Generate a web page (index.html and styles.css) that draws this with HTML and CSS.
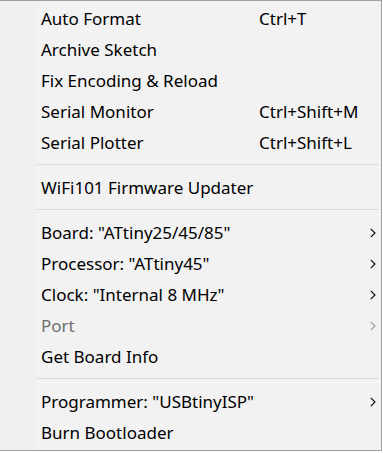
FILE: index.html
```html
<!DOCTYPE html>
<html>
<head>
<meta charset="utf-8">
<link rel="stylesheet" href="styles.css">
</head>
<body>
<div class="menu">
  <div class="item"><span class="label">Auto Format</span><span class="key">Ctrl+T</span></div>
  <div class="item"><span class="label">Archive Sketch</span></div>
  <div class="item"><span class="label">Fix Encoding &amp; Reload</span></div>
  <div class="item"><span class="label">Serial Monitor</span><span class="key">Ctrl+Shift+M</span></div>
  <div class="item"><span class="label">Serial Plotter</span><span class="key">Ctrl+Shift+L</span></div>
  <div class="sep"></div>
  <div class="item"><span class="label">WiFi101 Firmware Updater</span></div>
  <div class="sep"></div>
  <div class="item"><span class="label">Board: "ATtiny25/45/85"</span><span class="key"></span><svg class="arrow" viewBox="0 0 6 10" width="6" height="10"><path d="M0.8 0.8 L5 5 L0.8 9.2" fill="none" stroke="#000" stroke-width="1.1"/></svg></div>
  <div class="item"><span class="label">Processor: "ATtiny45"</span><span class="key"></span><svg class="arrow" viewBox="0 0 6 10" width="6" height="10"><path d="M0.8 0.8 L5 5 L0.8 9.2" fill="none" stroke="#000" stroke-width="1.1"/></svg></div>
  <div class="item"><span class="label">Clock: "Internal 8 MHz"</span><span class="key"></span><svg class="arrow" viewBox="0 0 6 10" width="6" height="10"><path d="M0.8 0.8 L5 5 L0.8 9.2" fill="none" stroke="#000" stroke-width="1.1"/></svg></div>
  <div class="item disabled"><span class="label">Port</span><span class="key"></span><svg class="arrow" viewBox="0 0 6 10" width="6" height="10"><path d="M0.8 0.8 L5 5 L0.8 9.2" fill="none" stroke="#9a9a9a" stroke-width="1.1"/></svg></div>
  <div class="item"><span class="label">Get Board Info</span></div>
  <div class="sep"></div>
  <div class="item"><span class="label">Programmer: "USBtinyISP"</span><span class="key"></span><svg class="arrow" viewBox="0 0 6 10" width="6" height="10"><path d="M0.8 0.8 L5 5 L0.8 9.2" fill="none" stroke="#000" stroke-width="1.1"/></svg></div>
  <div class="item"><span class="label">Burn Bootloader</span></div>
</div>
</body>
</html>
```
FILE: styles.css
```css
html, body {
  margin: 0;
  padding: 0;
  background: #ffffff;
}
body {
  width: 383px;
  height: 453px;
  overflow: hidden;
}
.menu {
  box-sizing: border-box;
  width: 382px;
  height: 451px;
  border-top: 1px solid #a0a0a0;
  border-right: 1px solid #a0a0a0;
  border-bottom: 1px solid #a0a0a0;
  background: linear-gradient(to right, #f0f0f0 0, #f0f0f0 36px, #f2f2f2 36px);
  padding: 2px 0 0 0;
  display: flex;
  flex-direction: column;
  font-family: "Noto Sans", "Open Sans", sans-serif;
  font-size: 17px;
  color: #000;
}
.item {
  height: 31px;
  display: grid;
  grid-template-columns: 218px 1fr 7px;
  align-items: center;
  padding-left: 41px;
  padding-right: 4px;
  line-height: 31px;
  white-space: nowrap;
}
.item.disabled {
  color: #6d6d6d;
}
.arrow {
  justify-self: start;
  display: block;
}
.sep {
  height: 1px;
  margin: 6px 2px 7px 37px;
  background: #d7d7d7;
}
```
